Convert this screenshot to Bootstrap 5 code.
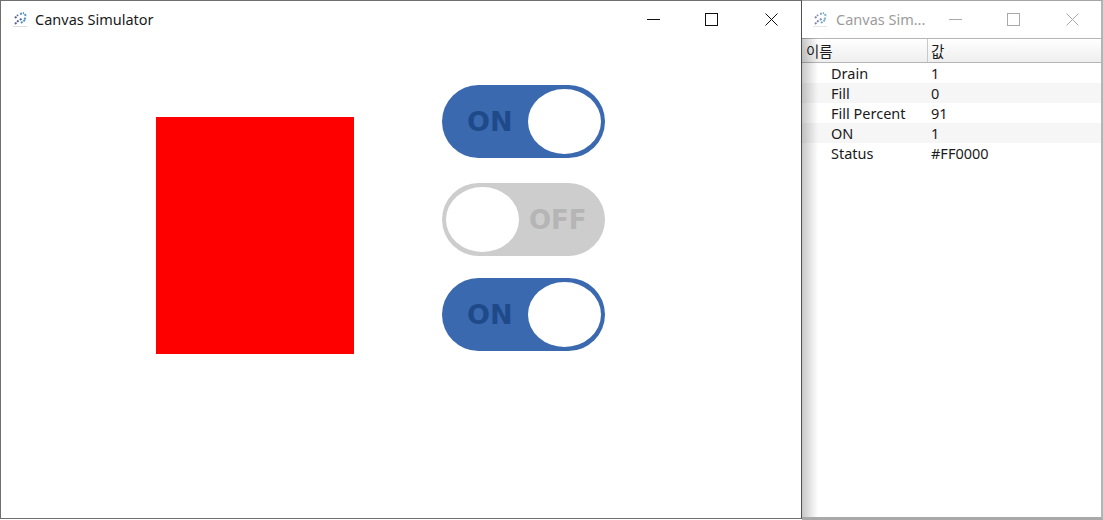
<!DOCTYPE html>
<html lang="ko">
<head>
    <meta charset="UTF-8">
    <title>Canvas Simulator</title>
    <link href="https://cdn.jsdelivr.net/npm/bootstrap@5.3.3/dist/css/bootstrap.min.css" rel="stylesheet">
    <style>
        html,body{height:520px;overflow:hidden;background:#fff;}
        body{font-family:"Noto Sans","Noto Sans CJK KR",sans-serif;font-size:14.5px;color:#1a1a1a;}
        .desk{height:520px;}
        .win-main{width:802px;height:519px;border:1px solid #6f6f6f;border-right:1px solid #4f4f4f;flex:none;}
        .win-side{width:301px;height:520px;flex:none;border-top:1px solid #a5a5a5;border-right:2px solid #b4b4b4;border-bottom:3px solid #a9a9a9;}
        .title-bar{height:37px;padding-left:11px;}
        .title-bar svg{flex:none;}
        .title-text{margin-left:6px;font-size:14.5px;line-height:37px;white-space:nowrap;}
        .win-side .title-text{color:#9c9c9c;margin-left:7px;}
        .win-side .title-bar{padding-left:10px;}
        .ctl{width:58px;height:37px;display:flex;align-items:center;justify-content:center;}
        .ctl svg{display:block;}
        .ctl-row{margin-right:1px;flex:none;}
        .ctl-close{margin-left:2px;}
        .win-side .ctl-row{margin-right:0;}
        .win-side .ctl-close{margin-left:1px;}
        .free-canvas{position:relative;height:480px;}
        .red-box{position:absolute;left:155px;top:79px;width:198px;height:237px;background:#f00;}
        .sw{position:absolute;left:441px;width:163px;height:73px;border-radius:37px;display:flex;align-items:center;font-family:"DejaVu Sans",sans-serif;font-weight:700;font-size:27px;}
        .sw-on{background:#3a69b0;color:#1f4a8a;padding-left:25px;padding-top:2px;}
        .sw-off{background:#cdcdcd;color:#b5b5b5;padding-left:87px;padding-top:2px;font-size:26px;}
        .sw-a{top:47px;}
        .sw-b{top:145px;}
        .sw-c{top:240px;}
        .knob{position:absolute;top:4px;width:73px;height:65px;border-radius:50%;background:#fff;}
        .sw-on .knob{right:4px;}
        .sw-off .knob{left:4px;}
        .side-body{position:relative;flex:1;}
        .side-body::before{content:"";position:absolute;left:0;top:0;bottom:0;width:16px;background:linear-gradient(to right,rgba(0,0,0,.22),rgba(0,0,0,0));pointer-events:none;z-index:1;}
        .grid-head{height:25px;border-top:1px solid #b5b5b5;border-bottom:1px solid #b5b5b5;background:linear-gradient(#fff,#eee);line-height:24px;}
        .cell-name{width:125px;flex:none;}
        .head-name{width:126px;padding-left:4px;border-right:1px solid #c8c8c8;}
        .head-val{padding-left:3px;}
        .grid-row{height:20px;line-height:21px;}
        .grid-row:nth-child(even){background:#f6f6f6;}
        .grid-row .cell-name{padding-left:29px;}
        .grid-row .cell-val{padding-left:4px;}
    </style>
</head>
<body>
<div class="desk d-flex">
    <div class="win-main d-flex flex-column">
        <div class="title-bar d-flex align-items-center">
            <svg width="17" height="17" viewBox="0 0 17 17"><path d="M1 15.5h14" stroke="#ddd"/><path d="M8 3l4-1M13 3l1 3M12 8l2-1M9 12l4-3" stroke="#4f93c4" stroke-width="2" stroke-dasharray="2 1"/><path d="M3 7l3-3M3 13l4-4M8 9l2-2" stroke="#5a5f9a" stroke-width="2" stroke-dasharray="2 1"/></svg>
            <span class="title-text">Canvas Simulator</span>
            <div class="ms-auto d-flex ctl-row">
                <div class="ctl"><svg width="13" height="13"><path d="M0 6.5h13" stroke="#111"/></svg></div>
                <div class="ctl"><svg width="13" height="13"><rect x=".5" y=".5" width="12" height="12" fill="none" stroke="#111"/></svg></div>
                <div class="ctl ctl-close"><svg width="13" height="13"><path d="M.5.5l12 12M12.5.5l-12 12" stroke="#111"/></svg></div>
            </div>
        </div>
        <div class="free-canvas">
            <div class="red-box"></div>
            <div class="sw sw-on sw-a">ON<span class="knob"></span></div>
            <div class="sw sw-off sw-b"><span class="knob"></span>OFF</div>
            <div class="sw sw-on sw-c">ON<span class="knob"></span></div>
        </div>
    </div>
    <div class="win-side d-flex flex-column">
        <div class="title-bar d-flex align-items-center">
            <svg width="17" height="17" viewBox="0 0 17 17" opacity=".75"><path d="M1 15.5h14" stroke="#ddd"/><path d="M8 3l4-1M13 3l1 3M12 8l2-1M9 12l4-3" stroke="#4f93c4" stroke-width="2" stroke-dasharray="2 1"/><path d="M3 7l3-3M3 13l4-4M8 9l2-2" stroke="#5a5f9a" stroke-width="2" stroke-dasharray="2 1"/></svg>
            <span class="title-text">Canvas Sim...</span>
            <div class="ms-auto d-flex ctl-row">
                <div class="ctl"><svg width="13" height="13"><path d="M0 6.5h13" stroke="#a8a8a8"/></svg></div>
                <div class="ctl"><svg width="13" height="13"><rect x=".5" y=".5" width="12" height="12" fill="none" stroke="#a8a8a8"/></svg></div>
                <div class="ctl ctl-close"><svg width="13" height="13"><path d="M.5.5l12 12M12.5.5l-12 12" stroke="#a8a8a8"/></svg></div>
            </div>
        </div>
        <div class="side-body">
            <div class="grid-head d-flex">
                <div class="cell-name head-name">이름</div>
                <div class="head-val">값</div>
            </div>
            <div>
                <div class="grid-row d-flex"><div class="cell-name">Drain</div><div class="cell-val">1</div></div>
                <div class="grid-row d-flex"><div class="cell-name">Fill</div><div class="cell-val">0</div></div>
                <div class="grid-row d-flex"><div class="cell-name">Fill Percent</div><div class="cell-val">91</div></div>
                <div class="grid-row d-flex"><div class="cell-name">ON</div><div class="cell-val">1</div></div>
                <div class="grid-row d-flex"><div class="cell-name">Status</div><div class="cell-val">#FF0000</div></div>
            </div>
        </div>
    </div>
</div>
<script src="https://cdn.jsdelivr.net/npm/bootstrap@5.3.3/dist/js/bootstrap.bundle.min.js"></script>
</body>
</html>
